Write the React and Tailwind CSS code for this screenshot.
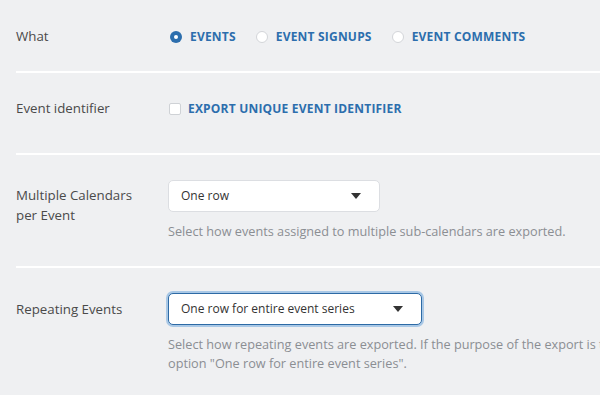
import React from 'react';

function Radio({ checked, label }) {
  return (
    <label className="flex items-center gap-2">
      {checked ? (
        <span className="flex h-[12px] w-[12px] items-center justify-center rounded-full bg-[#2c6ead]">
          <span className="h-[4px] w-[4px] rounded-full bg-white" />
        </span>
      ) : (
        <span className="h-[12px] w-[12px] rounded-full border border-[#d3d5d9] bg-white" />
      )}
      <span className="text-[12px] font-bold tracking-[0.2px] text-[#2c6ead]">{label}</span>
    </label>
  );
}

function Select({ value, width, focused }) {
  return (
    <div
      className={`flex h-[32px] items-center justify-between rounded-[5px] bg-white pl-3 pr-[18px] text-[12px] text-[#333] ${width} ${
        focused ? 'border border-[#2d6aa5] ring-2 ring-[#a9c8e6]' : 'border border-[#dcdee2]'
      }`}
    >
      <span>{value}</span>
      <svg width="10" height="6" viewBox="0 0 10 6">
        <path d="M0 0 L10 0 L5 6 Z" fill="#333" />
      </svg>
    </div>
  );
}

function Divider() {
  return <div className="h-[2px] bg-white" />;
}

export default function App() {
  return (
    <div
      className="h-[395px] w-[600px] overflow-hidden bg-[#eff0f2] pl-4 text-[13.3px] text-[#4a4a4a]"
      style={{ fontFamily: '"Open Sans", sans-serif' }}
    >
      <div className="w-[800px]">
        <div className="flex items-center pt-[25px] pb-[23px] leading-[23px]">
          <div className="w-[152px] shrink-0">What</div>
          <div className="flex items-center gap-5 pl-[2px]">
            <Radio checked label="EVENTS" />
            <Radio label="EVENT SIGNUPS" />
            <Radio label="EVENT COMMENTS" />
          </div>
        </div>
        <Divider />
        <div className="flex items-center pt-[24px] pb-[33px] leading-[23px]">
          <div className="w-[152px] shrink-0">Event identifier</div>
          <label className="flex items-center gap-[7px] pl-[1px]">
            <span className="h-[12px] w-[12px] rounded-[2px] border border-[#cfd2d6] bg-white" />
            <span className="text-[12px] font-bold tracking-[0.2px] text-[#2c6ead]">
              EXPORT UNIQUE EVENT IDENTIFIER
            </span>
          </label>
        </div>
        <Divider />
        <div className="flex pt-[25px] pb-[25px]">
          <div className="w-[152px] shrink-0 pt-[5px] leading-[20px]">
            Multiple Calendars
            <br />
            per Event
          </div>
          <div>
            <Select value="One row" width="w-[212px]" />
            <p className="mt-[10px] text-[12.7px] leading-[19px] text-[#8b8e93]">
              Select how events assigned to multiple sub-calendars are exported.
            </p>
          </div>
        </div>
        <Divider />
        <div className="flex pt-[25px] pb-[25px]">
          <div className="w-[152px] shrink-0 pt-[6px] leading-[20px]">Repeating Events</div>
          <div>
            <Select value="One row for entire event series" width="w-[254px]" focused />
            <p className="mt-[10px] whitespace-nowrap text-[12.7px] leading-[19px] text-[#8b8e93]">
              Select how repeating events are exported. If the purpose of the export is to import events into another calendar, we recommend the
              <br />
              option "One row for entire event series".
            </p>
          </div>
        </div>
      </div>
    </div>
  );
}
